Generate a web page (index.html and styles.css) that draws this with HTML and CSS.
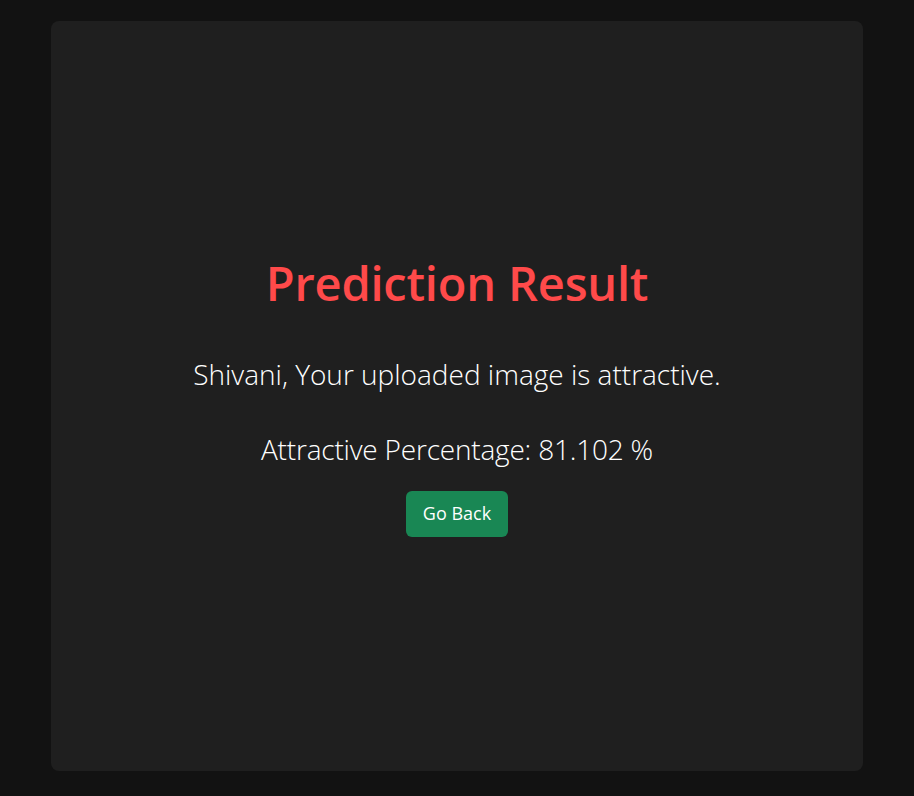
FILE: index.html
```html
<!DOCTYPE html>
<html lang="en">
<head>
<meta charset="utf-8">
<title>Prediction Result</title>
<link rel="stylesheet" href="styles.css">
</head>
<body>
<main class="card">
  <h1 class="title">Prediction Result</h1>
  <p class="line line-first">Shivani, Your uploaded image is attractive.</p>
  <p class="line line-second">Attractive Percentage: 81.102 %</p>
  <a class="btn" href="#">Go Back</a>
</main>
</body>
</html>
```

FILE: styles.css
```css
html, body {
  margin: 0;
  padding: 0;
  background: #121212;
  height: 100%;
}
body {
  font-family: "Open Sans", "Noto Sans", sans-serif;
  color: #ffffff;
  padding: 21px 51px 25px;
  box-sizing: border-box;
}
.card {
  background: #1f1f1f;
  border-radius: 8px;
  height: 750px;
  display: flex;
  flex-direction: column;
  align-items: center;
  justify-content: center;
  text-align: center;
}
.title {
  margin: 0 0 47px;
  font-size: 47px;
  font-weight: 600;
  color: #ff4a4a;
  line-height: 1.2;
  letter-spacing: -0.2px;
}
.line {
  margin: 0;
  font-size: 28px;
  font-weight: 300;
  line-height: 1.2;
}
.line-first {
  margin-bottom: 41px;
}
.line-second {
  margin-bottom: 25px;
  letter-spacing: -0.2px;
}
.btn {
  display: inline-block;
  background: #198754;
  color: #fff;
  text-decoration: none;
  font-size: 18px;
  line-height: 27px;
  padding: 9px 17px 10px;
  border-radius: 6px;
}
```
